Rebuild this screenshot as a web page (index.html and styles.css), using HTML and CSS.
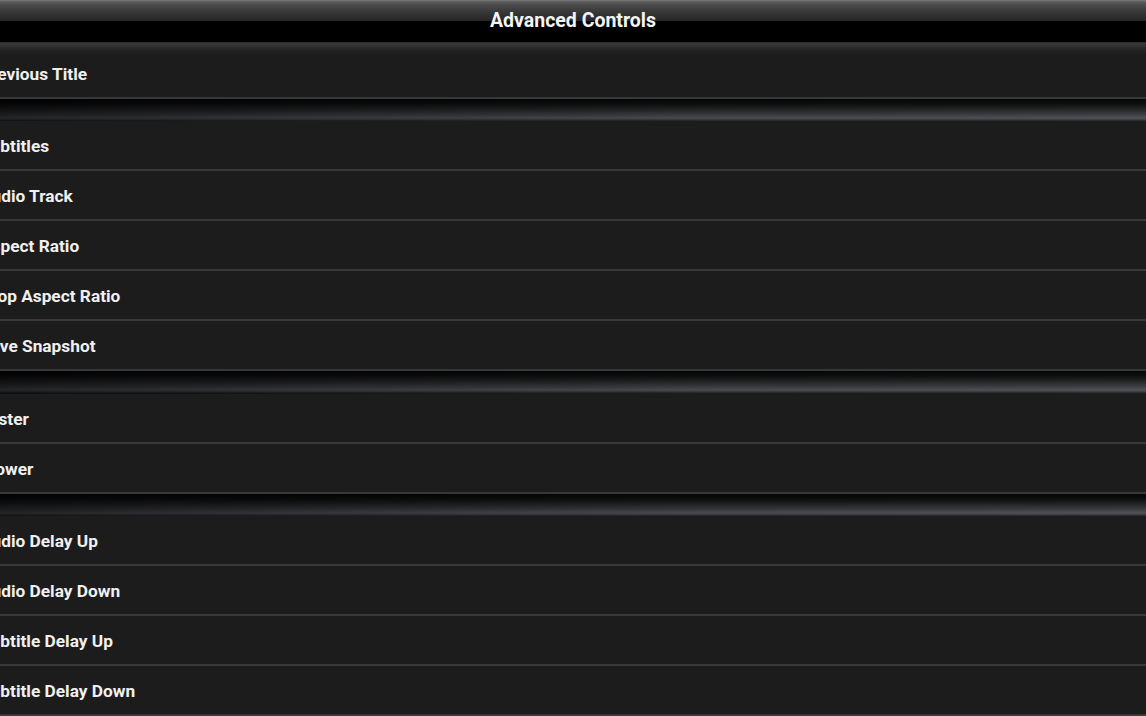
FILE: index.html
```html
<!DOCTYPE html>
<html>
<head>
<meta charset="utf-8">
<link rel="stylesheet" href="styles.css">
</head>
<body>
<div class="screen">
  <header class="titlebar">
    <div class="titlebar-gloss"></div>
    <div class="titlebar-band"><span class="title">Advanced Controls</span></div>
  </header>
  <ul class="list">
    <li class="item item-first">Previous Title</li>
    <li class="divider"></li>
    <li class="item">Subtitles</li>
    <li class="item">Audio Track</li>
    <li class="item">Aspect Ratio</li>
    <li class="item">Crop Aspect Ratio</li>
    <li class="item">Save Snapshot</li>
    <li class="divider divider-tall"></li>
    <li class="item">Faster</li>
    <li class="item">Slower</li>
    <li class="divider"></li>
    <li class="item">Audio Delay Up</li>
    <li class="item">Audio Delay Down</li>
    <li class="item">Subtitle Delay Up</li>
    <li class="item">Subtitle Delay Down</li>
  </ul>
</div>
</body>
</html>
```

FILE: styles.css
```css
html, body {
  margin: 0;
  padding: 0;
  background: #1b1b1b;
  overflow: hidden;
}

.screen {
  width: 1146px;
  height: 716px;
  overflow: hidden;
  display: flex;
  flex-direction: column;
  font-family: Roboto, "Liberation Sans", sans-serif;
  color: #f2f2f2;
}

.titlebar {
  display: flex;
  flex-direction: column;
  flex: none;
}

.titlebar-gloss {
  height: 21px;
  background: linear-gradient(#7a7a7a 0, #5a5a5a 2px, #444 7px, #333 14px, #262626 21px);
}

.titlebar-band {
  height: 21px;
  background: #000;
  position: relative;
}

.title {
  position: absolute;
  left: 0;
  right: 0;
  top: -12px;
  text-align: center;
  font-weight: 700;
  font-size: 19.5px;
  line-height: 24px;
  color: #f4f4f4;
}

.list {
  list-style: none;
  margin: 0;
  padding: 0;
  display: flex;
  flex-direction: column;
  flex: none;
}

.item {
  box-sizing: border-box;
  height: 50px;
  padding-top: 2px;
  border-bottom: 2px solid #383838;
  background: #1c1c1c;
  display: flex;
  align-items: center;
  font-weight: 700;
  font-size: 17.3px;
  text-indent: -20px;
  white-space: nowrap;
  overflow: hidden;
  color: #f0f0f0;
}

.item-first {
  height: 57px;
  padding-top: 8px;
  background: linear-gradient(#2a2a2a 0, #3a3a3a 2px, #2c2c2c 5px, #212121 9px, #1c1c1c 14px);
}

.divider {
  height: 22px;
  background:
    linear-gradient(to right, rgba(0,0,0,0.55) 0%, rgba(0,0,0,0.35) 25%, rgba(0,0,0,0.1) 60%, rgba(0,0,0,0) 100%),
    linear-gradient(#060606 0, #0c0c0c 4px, #1e1f21 9px, #3a3b3f 15px, #505257 19px, #3a3a3c 21px, #202020 22px);
}

.divider-tall {
  height: 23px;
}
```
